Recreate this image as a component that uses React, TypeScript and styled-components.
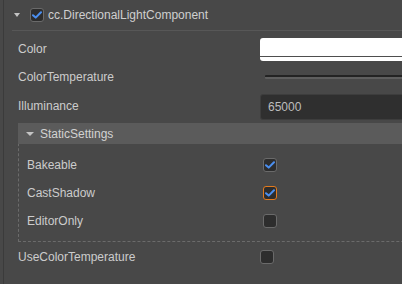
import React from 'react';
import styled, { createGlobalStyle, css } from 'styled-components';

const GlobalStyle = createGlobalStyle`
  html, body {
    margin: 0;
    padding: 0;
    background: #484848;
    overflow: hidden;
  }
  body {
    font-family: "Liberation Sans", Arial, sans-serif;
    font-size: 12px;
    color: #cccccc;
  }
`;

const Root = styled.div`
  width: 402px;
  height: 284px;
  overflow: hidden;
  padding-left: 3px;
  box-sizing: border-box;
`;

const Panel = styled.div`
  width: 460px;
  height: 284px;
  border-left: 1px solid #3b3b3b;
`;

const Header = styled.div`
  height: 30px;
  margin-left: 8px;
  padding-left: 2px;
  border-bottom: 1px solid #575757;
  display: flex;
  align-items: center;
`;

const Caret = styled.span<{ $size: number }>`
  display: inline-block;
  width: 0;
  height: 0;
  border-left: ${(p) => p.$size / 2}px solid transparent;
  border-right: ${(p) => p.$size / 2}px solid transparent;
  border-top: 4px solid #c4c4c4;
`;

const HeaderToggle = styled.span`
  display: inline-flex;
  margin-left: 10px;
`;

const HeaderTitle = styled.span`
  margin-left: 4px;
  color: #cfcfcf;
  font-size: 12px;
`;

const Body = styled.div`
  padding: 4px 0 0 14px;
`;

const Row = styled.div<{ $labelWidth: number; $gapTop?: number }>`
  display: grid;
  grid-template-columns: ${(p) => p.$labelWidth}px 1fr;
  align-items: center;
  height: 28px;
  margin-top: ${(p) => p.$gapTop ?? 0}px;
`;

const Label = styled.span`
  color: #cccccc;
  white-space: nowrap;
`;

const Swatch = styled.div`
  height: 23px;
  border-radius: 3px;
  background: linear-gradient(
    to bottom,
    #ffffff 0,
    #ffffff 18px,
    #4e4e4e 18px,
    #4e4e4e 19px,
    #ffffff 19px
  );
`;

const Track = styled.div`
  margin-left: 5px;
  height: 2px;
  background: #232323;
  border-bottom: 2px solid #5e5e5e;
  border-radius: 1px;
`;

const NumberInput = styled.div`
  align-self: start;
  margin-top: 3px;
  height: 26px;
  box-sizing: border-box;
  display: flex;
  align-items: center;
  padding-left: 7px;
  background: #2f2f2f;
  border: 1px solid #3d3d3d;
  border-radius: 3px;
  color: #bdbdbd;
`;

const Group = styled.div`
  margin-top: 4px;
  border: 1px dashed #6b6b6b;
  border-top: none;
  border-right-color: transparent;
  padding-bottom: 6px;
`;

const GroupHeader = styled.div`
  height: 21px;
  margin: 0 -1px;
  background: #5b5b5b;
  display: flex;
  align-items: center;
  padding-left: 8px;
  color: #d2d2d2;
`;

const GroupTitle = styled.span`
  margin-left: 6px;
`;

const GroupBody = styled.div`
  padding: 7px 0 0 8px;
`;

const Box = styled.span<{ $focused?: boolean }>`
  display: inline-flex;
  align-items: center;
  justify-content: center;
  width: 14px;
  height: 14px;
  box-sizing: border-box;
  border-radius: 3px;
  background: #2d2d2d;
  border: 1px solid #6a6a6a;
  ${(p) =>
    p.$focused &&
    css`
      border-color: #e27b1f;
    `}
`;

const Cell = styled.div`
  display: flex;
  align-items: center;
`;

const Check: React.FC<{ checked?: boolean; focused?: boolean }> = ({ checked, focused }) => (
  <Box $focused={focused}>
    {checked && (
      <svg width="10" height="8" viewBox="0 0 10 8">
        <path
          d="M1 4.2 L3.7 6.6 L9 1.2"
          fill="none"
          stroke="#4b8ff0"
          strokeWidth="2"
          strokeLinecap="round"
          strokeLinejoin="round"
        />
      </svg>
    )}
  </Box>
);

const App: React.FC = () => {
  return (
    <>
      <GlobalStyle />
      <Root>
        <Panel>
          <Header>
            <Caret $size={7} />
            <HeaderToggle>
              <Check checked />
            </HeaderToggle>
            <HeaderTitle>cc.DirectionalLightComponent</HeaderTitle>
          </Header>
          <Body>
            <Row $labelWidth={242}>
              <Label>Color</Label>
              <Swatch />
            </Row>
            <Row $labelWidth={242}>
              <Label>ColorTemperature</Label>
              <Track />
            </Row>
            <Row $labelWidth={242}>
              <Label>Illuminance</Label>
              <NumberInput>65000</NumberInput>
            </Row>
            <Group>
              <GroupHeader>
                <Caret $size={8} />
                <GroupTitle>StaticSettings</GroupTitle>
              </GroupHeader>
              <GroupBody>
                <Row $labelWidth={236}>
                  <Label>Bakeable</Label>
                  <Cell>
                    <Check checked />
                  </Cell>
                </Row>
                <Row $labelWidth={236}>
                  <Label>CastShadow</Label>
                  <Cell>
                    <Check checked focused />
                  </Cell>
                </Row>
                <Row $labelWidth={236}>
                  <Label>EditorOnly</Label>
                  <Cell>
                    <Check />
                  </Cell>
                </Row>
              </GroupBody>
            </Group>
            <Row $labelWidth={242} $gapTop={1}>
              <Label>UseColorTemperature</Label>
              <Cell>
                <Check />
              </Cell>
            </Row>
          </Body>
        </Panel>
      </Root>
    </>
  );
};

export default App;
